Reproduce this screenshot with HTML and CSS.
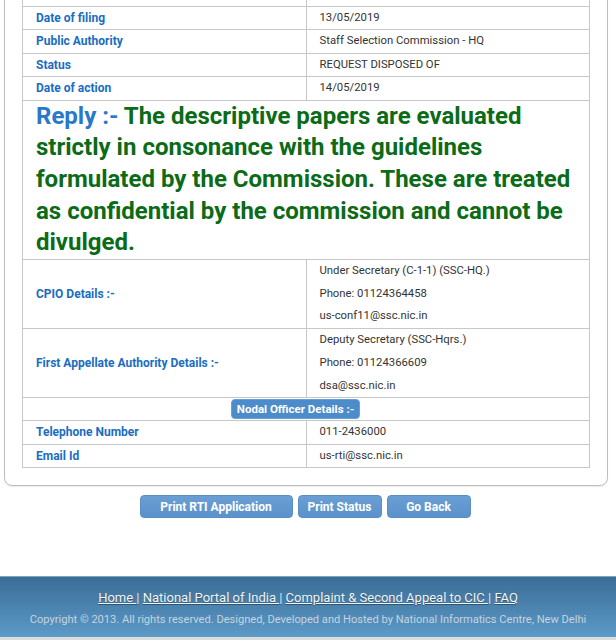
FILE: index.html
```html
<!DOCTYPE html>
<html>
<head>
<meta charset="utf-8">
<link rel="stylesheet" href="styles.css">
</head>
<body>
<div class="panel">
  <table class="details">
    <colgroup><col class="col-half"><col></colgroup>
    <tr class="first-row"><td class="label">Request Number</td><td class="value">SSCOM/R/2019/50123</td></tr>
    <tr><td class="label">Date of filing</td><td class="value">13/05/2019</td></tr>
    <tr><td class="label">Public Authority</td><td class="value">Staff Selection Commission - HQ</td></tr>
    <tr><td class="label">Status</td><td class="value">REQUEST DISPOSED OF</td></tr>
    <tr><td class="label">Date of action</td><td class="value">14/05/2019</td></tr>
    <tr><td class="reply" colspan="2"><span class="reply-label">Reply :-</span> The descriptive papers are evaluated strictly in consonance with the guidelines formulated by the Commission. These are treated as confidential by the commission and cannot be divulged.</td></tr>
    <tr><td class="label">CPIO Details :-</td><td class="value multi"><div>Under Secretary (C-1-1) (SSC-HQ.)</div><div>Phone: 01124364458</div><div>us-conf11@ssc.nic.in</div></td></tr>
    <tr><td class="label">First Appellate Authority Details :-</td><td class="value multi"><div>Deputy Secretary (SSC-Hqrs.)</div><div>Phone: 01124366609</div><div>dsa@ssc.nic.in</div></td></tr>
    <tr><td class="nodal" colspan="2"><span class="badge">Nodal Officer Details :-</span></td></tr>
    <tr><td class="label">Telephone Number</td><td class="value">011-2436000</td></tr>
    <tr><td class="label">Email Id</td><td class="value">us-rti@ssc.nic.in</td></tr>
  </table>
</div>
<div class="actions">
  <button class="btn btn-wide">Print RTI Application</button>
  <button class="btn">Print Status</button>
  <button class="btn">Go Back</button>
</div>
<footer class="footer">
  <div class="links"><a href="#">Home </a>| <a href="#">National Portal of India </a>| <a href="#">Complaint &amp; Second Appeal to CIC </a>| <a href="#">FAQ</a></div>
  <div class="copy">Copyright © 2013. All rights reserved. Designed, Developed and Hosted by National Informatics Centre, New Delhi</div>
</footer>
</body>
</html>
```
FILE: styles.css
```css
html, body {
  margin: 0;
  padding: 0;
  background: #fff;
  font-family: Roboto, "Liberation Sans", sans-serif;
}
body {
  overflow: hidden;
  height: 640px;
  display: flex;
  flex-direction: column;
}
.panel {
  margin: -38px 8px 0 4px;
  border: 1px solid #bdbdbd;
  border-radius: 0 0 8px 8px;
  padding: 11px 17px 17px 17px;
  box-shadow: 0 1px 1px rgba(0,0,0,0.08);
}
.details {
  width: 100%;
  border-collapse: collapse;
  table-layout: fixed;
}
.col-half {
  width: 50%;
}
.details td {
  border: 1px solid #c8c8c8;
  padding: 4px 13px;
  line-height: 14.5px;
  vertical-align: middle;
}
.details .first-row td {
  padding-bottom: 12px;
}
.label {
  color: #1a6dbf;
  font-weight: 700;
  font-size: 12px;
}
.value {
  color: #333;
  font-size: 11.3px;
}
.details td.value.multi {
  padding: 0 13px;
}
.value.multi div {
  line-height: 22.7px;
}
.reply {
  color: #0b6b17;
  font-weight: 700;
  font-size: 24px;
}
.details td.reply {
  line-height: 31.7px;
  padding: 0 13px;
}
.reply-label {
  color: #2a78c9;
}
.details td.nodal {
  text-align: center;
  padding: 1px 34px 1px 13px;
  line-height: 18px;
}
.badge {
  display: inline-block;
  vertical-align: middle;
  background: #4d8ccb;
  color: #fff;
  font-weight: 700;
  font-size: 11.5px;
  line-height: 18px;
  padding: 0 5px;
  border-radius: 4px;
  border: 1px solid #6aa0d6;
}
.actions {
  display: flex;
  justify-content: center;
  gap: 5px;
  margin-top: 9px;
  padding-right: 6px;
}
.btn {
  font-family: Roboto, "Liberation Sans", sans-serif;
  font-weight: 700;
  font-size: 12px;
  color: #fff;
  background: linear-gradient(#6a9fd4, #5b92cb);
  border: 1px solid #5a8ec4;
  border-radius: 4px;
  height: 23px;
  width: 84px;
  padding: 0;
}
.btn-wide {
  width: 153px;
}
.footer {
  margin-top: auto;
  height: 61px;
  margin-bottom: 3px;
  background: linear-gradient(#3b6d96, #5c9ac8);
  border-top: 1px solid #7fa2bf;
  box-shadow: 0 3px 0 #dcdcdc;
  text-align: center;
  box-sizing: border-box;
  padding-top: 13px;
}
.links {
  font-size: 13px;
  color: #e8eef3;
  line-height: 16px;
  text-shadow: 0 1px 1px rgba(0,0,0,0.35);
}
.links a {
  color: #f2f4f6;
  text-decoration: underline;
}
.copy {
  margin-top: 7px;
  font-size: 11.1px;
  color: #c7d3dd;
  line-height: 14px;
}
```
